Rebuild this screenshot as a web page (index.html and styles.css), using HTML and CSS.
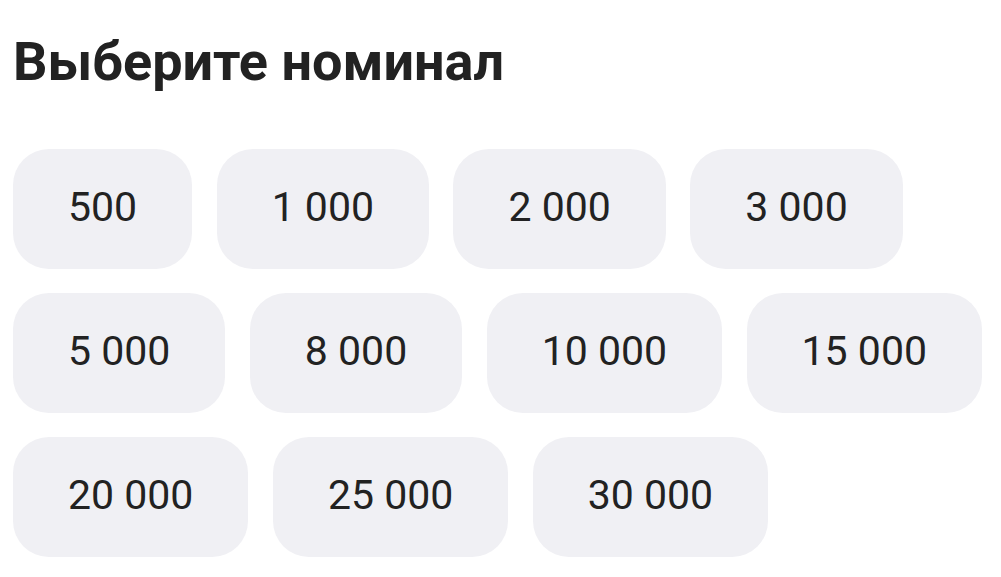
FILE: index.html
```html
<!DOCTYPE html>
<html lang="ru">
<head>
<meta charset="utf-8">
<link rel="stylesheet" href="styles.css">
</head>
<body>
<section class="picker">
  <h1 class="title">Выберите номинал</h1>
  <div class="chips">
    <button class="chip">500</button>
    <button class="chip">1 000</button>
    <button class="chip">2 000</button>
    <button class="chip">3 000</button>
    <button class="chip">5 000</button>
    <button class="chip">8 000</button>
    <button class="chip">10 000</button>
    <button class="chip">15 000</button>
    <button class="chip">20 000</button>
    <button class="chip">25 000</button>
    <button class="chip">30 000</button>
  </div>
</section>
</body>
</html>
```

FILE: styles.css
```css
html, body {
  margin: 0;
  padding: 0;
  background: #ffffff;
}
body {
  font-family: Roboto, "Noto Sans", sans-serif;
  color: #222222;
}
.picker {
  padding: 0 13px;
}
.title {
  margin: 0;
  padding-top: 30px;
  font-size: 54px;
  font-weight: 700;
  line-height: 64px;
  color: #222222;
}
.chips {
  margin-top: 55px;
  display: flex;
  flex-wrap: wrap;
  gap: 24px 24.5px;
  width: 980px;
}
.chip {
  font-family: Roboto, "Noto Sans", sans-serif;
  font-size: 41px;
  color: #222222;
  background: #f0f0f4;
  border: none;
  border-radius: 36px;
  height: 120px;
  padding: 0 55px 4px;
}
```
